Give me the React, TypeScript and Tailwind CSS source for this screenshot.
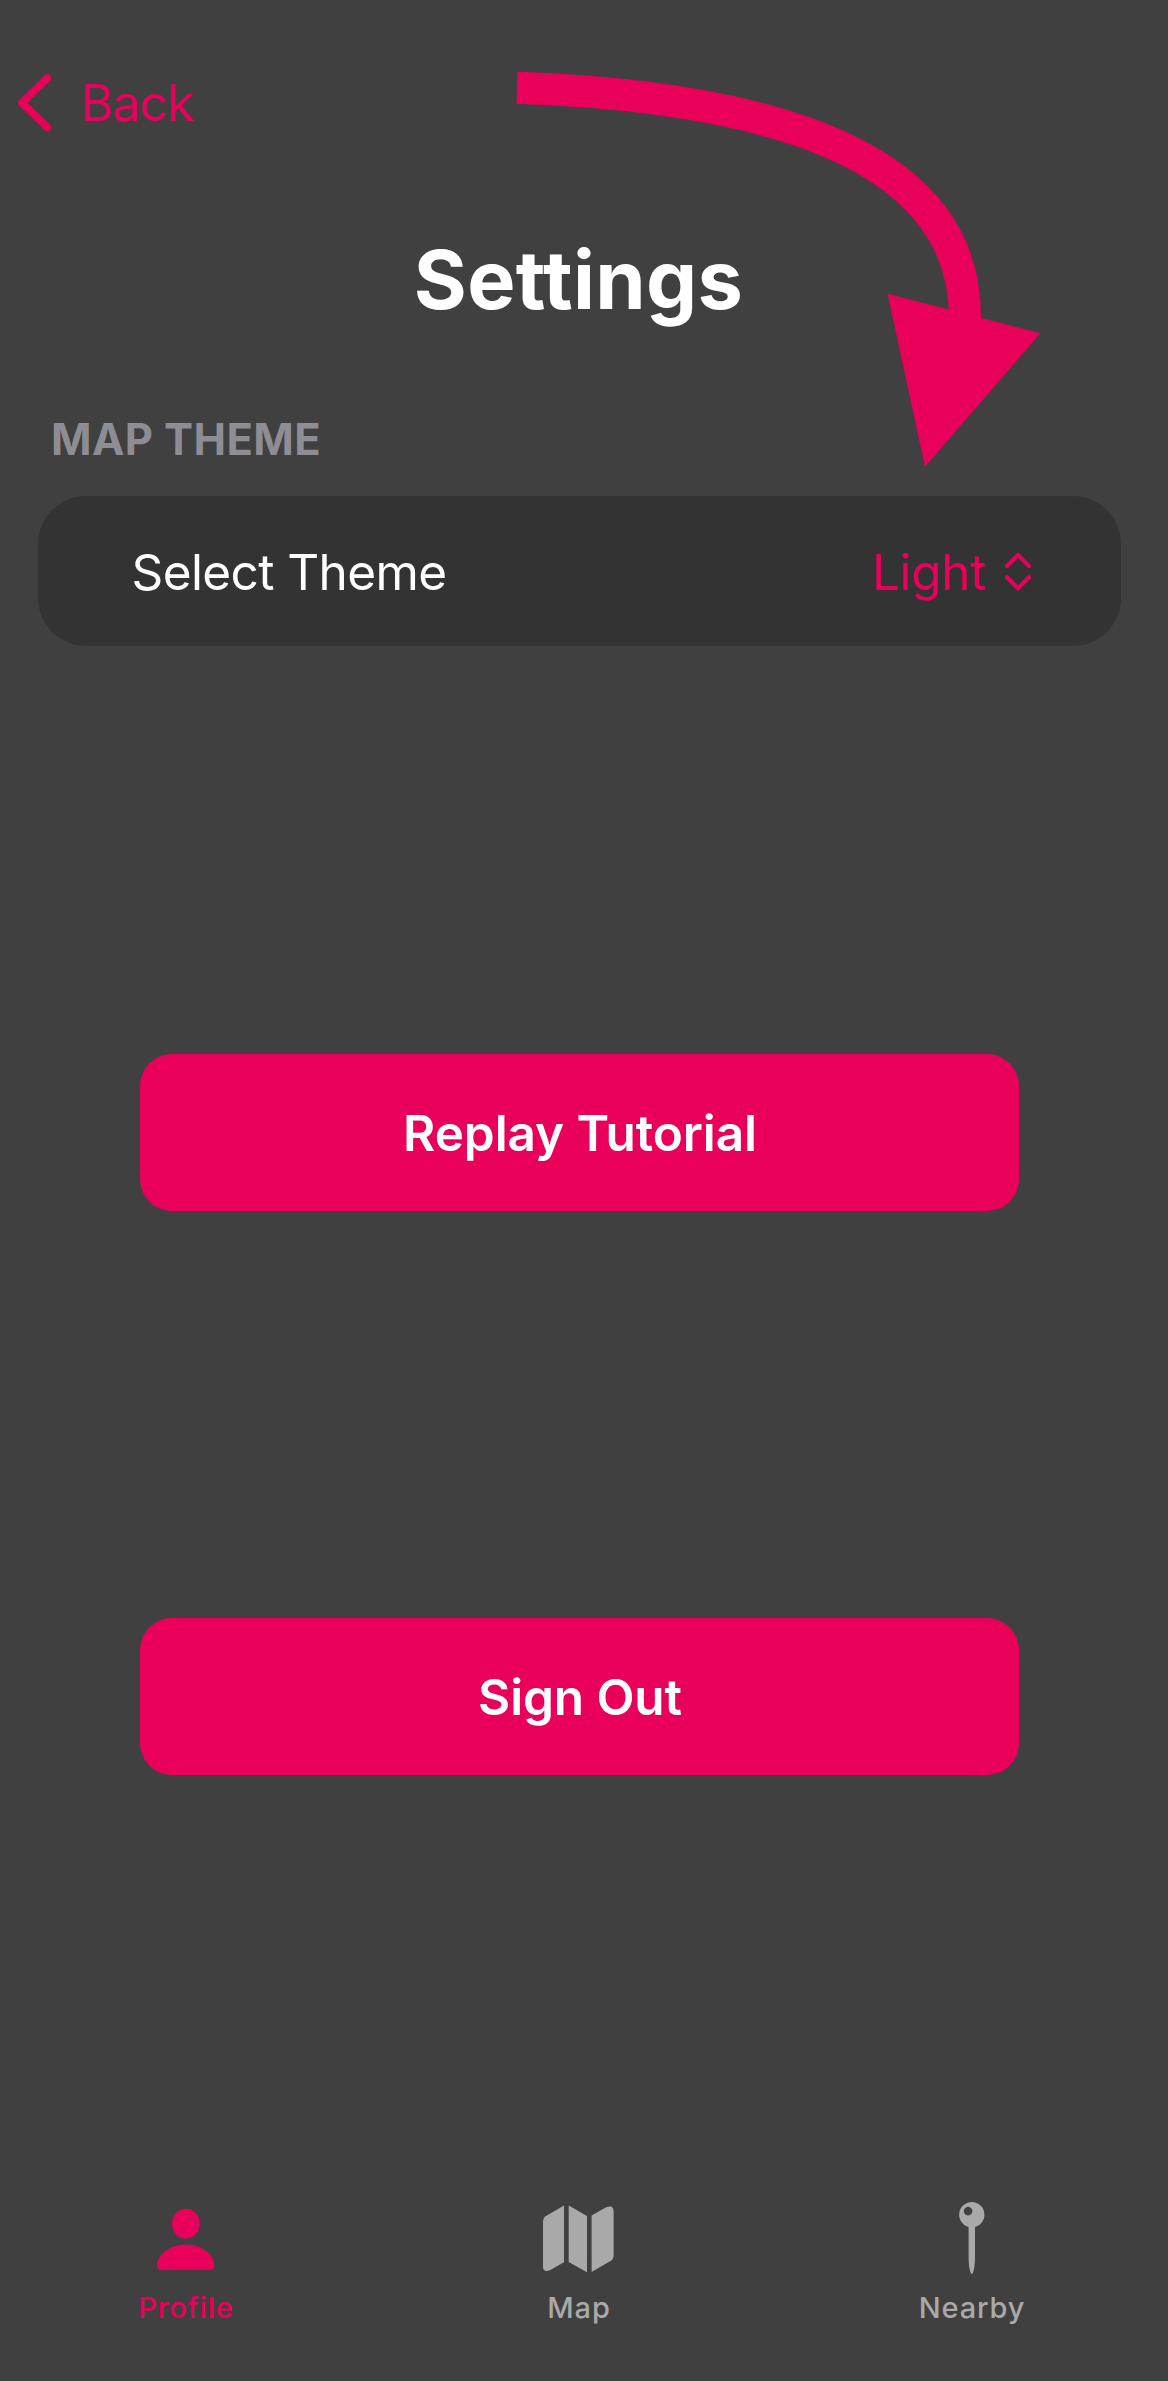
import type { ReactNode } from "react";

function BackChevron() {
  return (
    <svg width="35" height="58" viewBox="0 0 35 58" fill="none" className="ml-[17px]">
      <path d="M30.2 4.2 L4.9 28.7 L30.2 53.2" stroke="currentColor" strokeWidth="7.8" strokeLinecap="round" strokeLinejoin="round" />
    </svg>
  );
}

function UpDownChevron() {
  return (
    <svg width="28" height="40" viewBox="0 0 28 40" fill="none">
      <path d="M3 14.1 L14 2.9 L25 14.1 M3 25.2 L14 36.4 L25 25.2" stroke="currentColor" strokeWidth="4.2" strokeLinecap="round" strokeLinejoin="round" />
    </svg>
  );
}

function HintArrow() {
  return (
    <svg width="560" height="440" viewBox="490 40 560 440" className="pointer-events-none absolute left-[490px] top-[40px] text-[#e8005a]">
      <path d="M517 87.8 Q965 103.5 965 317 V330" fill="none" stroke="currentColor" strokeWidth="32" />
      <path d="M887.6 293.7 L1040.4 333.3 L925 466.7 Z" fill="currentColor" />
    </svg>
  );
}

function ProfileIcon() {
  return (
    <svg width="80" height="80" viewBox="0 0 80 80" fill="currentColor">
      <ellipse cx="39.8" cy="28.7" rx="13.8" ry="15" />
      <path d="M15.5 75 C12.5 75 11 73 11 70 C11 62 21.5 49.4 39.8 49.4 C58 49.4 68.4 62 68.4 70 C68.4 73 66.8 75 63.8 75 Z" />
    </svg>
  );
}

function MapIcon() {
  return (
    <svg width="80" height="80" viewBox="0 0 80 80" fill="currentColor">
      <path d="M25 10.6 V67.3 L11.3 75 Q4 78 4 71.5 V26 Q4 23 6.6 21.3 Z" />
      <path d="M29.7 10.6 L48 21 V77.2 L29.7 67 Z" />
      <path d="M52.6 20.6 L67.1 12.3 Q74.6 9.4 74.6 16.5 V61 Q74.6 64 71.9 65.8 L52.6 77 Z" />
    </svg>
  );
}

function PinIcon() {
  return (
    <svg width="80" height="80" viewBox="0 0 80 80" fill="currentColor">
      <path fillRule="evenodd" d="M39.8 7 A12.7 12.7 0 1 1 39.79 7 Z M36.1 11.8 A4.3 4.3 0 1 0 36.11 11.8 Z" />
      <path d="M36.6 31 H43 V62 C43 69 41.8 79 39.8 79 C37.8 79 36.6 69 36.6 62 Z" />
    </svg>
  );
}

function ActionButton({ children, className }: { children: ReactNode; className: string }) {
  return (
    <button className={`flex h-[157px] w-[879px] items-center justify-center self-center rounded-[32px] bg-[#e8005a] pl-px text-[49.5px] leading-[60px] font-semibold text-white ${className}`}>
      {children}
    </button>
  );
}

function Tab({ icon, label, active }: { icon: ReactNode; label: string; active?: boolean }) {
  return (
    <button className={`flex flex-col items-center ${active ? "text-[#e8005a]" : "text-[#a9a9a9]"}`}>
      {icon}
      <span className="mt-[16px] text-[29px] leading-[34px] font-medium tracking-[0.85px]">{label}</span>
    </button>
  );
}

export default function App() {
  return (
    <div className="relative flex h-[2381px] w-[1168px] flex-col overflow-hidden bg-[#404040] font-['Inter',sans-serif] text-white">
      <header className="mt-[73px] flex h-[60px] items-center text-[#e8005a]">
        <BackChevron />
        <span className="ml-[29px] text-[50px] leading-[60px] tracking-[-1px]">Back</span>
      </header>

      <main className="flex w-[1159px] flex-col">
        <h1 className="mt-[99px] pr-[2px] text-center text-[81px] leading-[96px] font-bold tracking-[0.34px]">Settings</h1>

        <h2 className="mt-[85px] pl-[51px] text-[43.5px] leading-[52px] font-bold tracking-[0.4px] text-[#8e8d93]">MAP THEME</h2>
        <section className="mt-[31px] ml-[38px] flex h-[150px] w-[1083px] items-center justify-between rounded-[48px] bg-[#333333] pt-[2px] pr-[89px] pl-[93.5px] text-[49.5px] leading-[60px]">
          <span className="tracking-[-0.6px]">Select Theme</span>
          <button className="flex items-center gap-[18px] text-[#e8005a]">
            <span className="tracking-[-0.35px]">Light</span>
            <UpDownChevron />
          </button>
        </section>

        <ActionButton className="mt-[408px] tracking-[-0.07px]">Replay Tutorial</ActionButton>
        <ActionButton className="mt-[407px] tracking-[-0.1px]">Sign Out</ActionButton>
      </main>

      <nav className="mt-[420px] -ml-[10.5px] grid w-[1179px] grid-cols-3">
        <Tab icon={<ProfileIcon />} label="Profile" active />
        <Tab icon={<MapIcon />} label="Map" />
        <Tab icon={<PinIcon />} label="Nearby" />
      </nav>

      <HintArrow />
    </div>
  );
}
